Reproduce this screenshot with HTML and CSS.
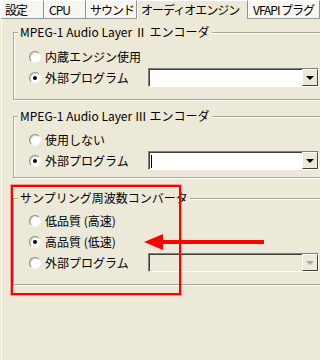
FILE: index.html
```html
<!DOCTYPE html>
<html lang="ja">
<head>
  <meta charset="UTF-8">
  <title>オーディオエンジン</title>
  <link rel="stylesheet" href="styles.css">
</head>
<body>
  <div class="window">
    <div class="tabs">
      <div class="tab tab-settings">設定</div>
      <div class="tab tab-cpu">CPU</div>
      <div class="tab tab-sound">サウンド</div>
      <div class="tab tab-audio active">オーディオエンジン</div>
      <div class="tab tab-vfapi">VFAPI プラグ</div>
    </div>

    <div class="sheet">
      <fieldset class="group group-l2">
        <legend>MPEG-1 Audio Layer Ⅱ エンコーダ</legend>
        <div class="row">
          <span class="radio"></span><span class="label">内蔵エンジン使用</span>
        </div>
        <div class="row">
          <span class="radio checked"></span><span class="label">外部プログラム</span>
          <div class="combo"><span class="field"></span><span class="drop"></span></div>
        </div>
      </fieldset>

      <fieldset class="group group-l3">
        <legend>MPEG-1 Audio Layer Ⅲ エンコーダ</legend>
        <div class="row">
          <span class="radio"></span><span class="label">使用しない</span>
        </div>
        <div class="row">
          <span class="radio checked"></span><span class="label">外部プログラム</span>
          <div class="combo"><span class="field"><span class="caret"></span></span><span class="drop"></span></div>
        </div>
      </fieldset>

      <fieldset class="group group-rate">
        <legend>サンプリング周波数コンバータ</legend>
        <div class="row">
          <span class="radio"></span><span class="label">低品質 (高速)</span>
        </div>
        <div class="row">
          <span class="radio checked"></span><span class="label">高品質 (低速)</span>
        </div>
        <div class="row">
          <span class="radio"></span><span class="label">外部プログラム</span>
          <div class="combo disabled"><span class="field"></span><span class="drop"></span></div>
        </div>
      </fieldset>
    </div>

    <!-- annotation drawn over the dialog -->
    <div class="callout"></div>
    <svg class="arrow" width="124" height="20" viewBox="0 0 124 20">
      <polygon points="0,10 19,2 19,18" fill="#f00"/>
      <rect x="18" y="8" width="102" height="4" fill="#f00"/>
    </svg>
  </div>
</body>
</html>
```

FILE: styles.css
```css
:root {
  --face: #ece9d8;
  --tab-face: #f7f6f1;
  --edge-dark: #aca899;
  --tab-border: #919b9c;
  --ink: #000;
}
html, body { margin: 0; padding: 0; }
body {
  width: 320px;
  height: 360px;
  overflow: hidden;
  background: var(--face);
  font-family: "Noto Sans CJK JP", "DejaVu Sans", sans-serif;
  font-size: 12px;
  color: var(--ink);
}
.window { position: relative; width: 320px; height: 360px; }

/* Tab strip */
.tabs { display: flex; height: 18px; white-space: nowrap; }
.tab {
  box-sizing: border-box;
  height: 18px;
  line-height: 17px;
  padding-left: 4px;
  letter-spacing: -1px;
  background: var(--tab-face);
  border-left: 1px solid #fff;
  border-right: 1px solid #8f8f8f;
  border-top: 1px solid #fff;
  overflow: hidden;
}
.tab-settings { width: 44px; }
.tab-cpu { width: 42px; }
.tab-sound { width: 51px; padding-left: 3px; }
.tab-audio { width: 111px; padding-left: 3px; }
.tab-vfapi { flex: 1; padding-left: 4px; }
.tab.active {
  background: var(--face);
  height: 19px;
  margin-bottom: -1px;
  position: relative;
  z-index: 1;
}

/* Sheet */
.sheet {
  height: 342px;
  margin-left: 1px;
  border-top: 1px solid var(--tab-border);
  border-left: 1px solid #fbfbf9;
  overflow: hidden;
}

/* Group boxes */
.group {
  width: 330px;
  margin: 0 0 0 11px;
  padding: 0;
  border: 1px solid var(--edge-dark);
  box-shadow: inset 1px 1px 0 #fff, 1px 1px 0 #fff;
  min-inline-size: 0;
}
.group legend {
  margin-left: 4px;
  padding: 0 2px;
  line-height: 14px;
  background: var(--face);
}
.group-l2 { margin-top: 6px; padding: 7px 0 11px; }
.group-l3 { margin-top: 9px; padding: 6px 0 6px; }
.group-rate { margin-top: 13px; padding: 5px 0 11px; }

.row {
  display: flex;
  align-items: center;
  height: 21px;
  padding-left: 15px;
}
.label { flex: 0 0 103px; margin-left: 4px; white-space: nowrap; }

/* Radio buttons, classic look */
.radio {
  box-sizing: border-box;
  width: 12px;
  height: 12px;
  border-radius: 50%;
  border: 1px solid;
  border-color: #8a8a8a #f4f4f4 #f4f4f4 #8a8a8a;
  background: #fff;
  box-shadow: inset 1px 1px 0 #d8d8d8;
  display: flex;
  align-items: center;
  justify-content: center;
}
.radio.checked::after {
  content: "";
  width: 4px;
  height: 4px;
  border-radius: 50%;
  background: #000;
}

/* Combo boxes */
.combo {
  box-sizing: border-box;
  display: flex;
  width: 171px;
  height: 19px;
  border: 1px solid;
  border-color: #808080 #fff #fff #808080;
  background: #fff;
}
.combo .field {
  flex: 1;
  border-top: 1px solid #404040;
  border-left: 1px solid #404040;
  display: flex;
  align-items: center;
  padding-left: 1px;
}
.caret { width: 1px; height: 13px; background: #000; }
.drop {
  box-sizing: border-box;
  width: 16px;
  border: 1px solid;
  border-color: #fff #404040 #404040 #fff;
  background: var(--face);
  display: flex;
  align-items: center;
  justify-content: center;
}
.drop::after {
  content: "";
  border-left: 4px solid transparent;
  border-right: 4px solid transparent;
  border-top: 4px solid #000;
}
.combo.disabled { background: var(--face); }
.combo.disabled .drop::after { border-top-color: #aca899; }

/* Red annotation */
.callout {
  position: absolute;
  left: 11px;
  top: 185px;
  width: 166px;
  height: 106px;
  border: 2px solid #f00;
  box-shadow: 0 0 0 1px rgba(255, 80, 80, 0.5);
}
.arrow { position: absolute; left: 144px; top: 232px; }
```
